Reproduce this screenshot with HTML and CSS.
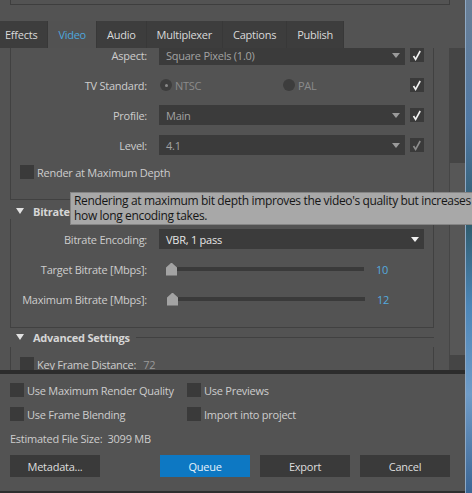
FILE: index.html
```html
<!DOCTYPE html>
<html lang="en">
<head>
    <meta charset="UTF-8">
    <meta name="viewport" content="width=device-width, initial-scale=1.0">
    <title>Export Settings</title>
    <link rel="stylesheet" href="styles.css">
</head>
<body>
<div class="screen">
    <div class="window">
        <div class="top-strip"><div class="top-box"></div></div>

        <div class="tabbar">
            <div class="tab">Effects</div>
            <div class="tab active">Video</div>
            <div class="tab">Audio</div>
            <div class="tab">Multiplexer</div>
            <div class="tab">Captions</div>
            <div class="tab">Publish</div>
        </div>

        <div class="main">
            <div class="scroller">
                <div class="settings">
                    <!-- basic video settings (scrolled a little) -->
                    <div class="box video-box">
                        <div class="row">
                            <span class="label">Aspect:</span>
                            <div class="select"><span>Square Pixels (1.0)</span><i class="caret"></i></div>
                            <span class="check"><svg viewBox="0 0 14 14"><path d="M3.5 8 L5.6 11.4 L10.2 3"/></svg></span>
                        </div>
                        <div class="row">
                            <span class="label">TV Standard:</span>
                            <div class="radios">
                                <div class="radio-item"><span class="radio selected"></span>NTSC</div>
                                <div class="radio-item"><span class="radio"></span>PAL</div>
                            </div>
                            <span class="check"><svg viewBox="0 0 14 14"><path d="M3.5 8 L5.6 11.4 L10.2 3"/></svg></span>
                        </div>
                        <div class="row">
                            <span class="label">Profile:</span>
                            <div class="select"><span>Main</span><i class="caret"></i></div>
                            <span class="check"><svg viewBox="0 0 14 14"><path d="M3.5 8 L5.6 11.4 L10.2 3"/></svg></span>
                        </div>
                        <div class="row">
                            <span class="label">Level:</span>
                            <div class="select"><span>4.1</span><i class="caret"></i></div>
                            <span class="check dim"><svg viewBox="0 0 14 14"><path d="M3.5 8 L5.6 11.4 L10.2 3"/></svg></span>
                        </div>
                        <div class="row check-row">
                            <span class="check empty"></span>
                            <span>Render at Maximum Depth</span>
                        </div>
                    </div>

                    <div class="section-head">
                        <i class="tri"></i>
                        <span class="head-title">Bitrate Settings</span>
                        <span class="head-line"></span>
                    </div>
                    <div class="box bitrate-box">
                        <div class="row">
                            <span class="label">Bitrate Encoding:</span>
                            <div class="select bright"><span>VBR, 1 pass</span><i class="caret"></i></div>
                        </div>
                        <div class="row">
                            <span class="label">Target Bitrate [Mbps]:</span>
                            <div class="slider">
                                <span class="thumb" style="margin-left: 7px"></span>
                                <span class="track"></span>
                                <span class="value">10</span>
                            </div>
                        </div>
                        <div class="row">
                            <span class="label">Maximum Bitrate [Mbps]:</span>
                            <div class="slider">
                                <span class="thumb" style="margin-left: 8px"></span>
                                <span class="track"></span>
                                <span class="value">12</span>
                            </div>
                        </div>
                    </div>

                    <div class="section-head advanced-head">
                        <i class="tri"></i>
                        <span class="head-title">Advanced Settings</span>
                        <span class="head-line"></span>
                    </div>
                    <div class="box advanced-box">
                        <div class="row check-row">
                            <span class="check empty"></span>
                            <span>Key Frame Distance:</span>
                            <span class="muted">72</span>
                        </div>
                    </div>
                </div>
            </div>
            <div class="scrollbar"><div class="scroll-thumb"></div></div>
        </div>

        <div class="footer">
            <div class="opt-row">
                <div class="opt"><span class="check empty"></span>Use Maximum Render Quality</div>
                <div class="opt"><span class="check empty"></span>Use Previews</div>
            </div>
            <div class="opt-row">
                <div class="opt"><span class="check empty"></span>Use Frame Blending</div>
                <div class="opt"><span class="check empty"></span>Import into project</div>
            </div>
            <div class="opt-row">Estimated File Size:&nbsp; 3099 MB</div>
            <div class="buttons">
                <button class="btn metadata">Metadata...</button>
                <button class="btn primary">Queue</button>
                <button class="btn">Export</button>
                <button class="btn">Cancel</button>
            </div>
        </div>
    </div>
    <div class="desktop"></div>

    <div class="tooltip">Rendering at maximum bit depth improves the video's quality but increases<br>how long encoding takes.</div>
</div>
</body>
</html>
```

FILE: styles.css
```css
/* Export settings dialog, dark theme */
body {
    margin: 0;
    background-color: #535353;
    font-family: "Open Sans", "Noto Sans", sans-serif;
    font-size: 11px;
    letter-spacing: -0.25px;
    color: #cdcdcd;
}
.screen {
    position: relative;
    display: flex;
    width: 472px;
    height: 493px;
    overflow: hidden;
}
.window {
    width: 465px;
    display: flex;
    flex-direction: column;
    background-color: #535353;
    border-bottom: 2px solid #2e2e2e;
}
.desktop {
    flex: 1;
    border-left: 1px solid #8fa9c4;
    background: linear-gradient(to bottom, #6a7f96 0%, #4f78a4 25%, #2f5b6c 45%, #4c86b8 62%, #6f9cc8 80%, #3b6594 100%);
}

/* top edge of the panel above */
.top-strip {
    height: 21px;
}
.top-box {
    margin-left: 10px;
    width: 438px;
    height: 4px;
    border: 1px solid #3e3e3e;
    border-top: none;
}

/* tabs */
.tabbar {
    display: flex;
    align-self: flex-start;
    height: 27px;
    margin-left: -5px;
    background-color: #3d3d3d;
}
.tab {
    padding: 0 10px;
    line-height: 27px;
    color: #dadada;
    border-right: 1px solid #383838;
}
.tab.active {
    background-color: #525252;
    color: #4ea6dd;
}

/* scrolling settings area */
.main {
    display: flex;
    height: 322px;
}
.scroller {
    flex: 1;
    overflow: hidden;
    padding: 0 15px 0 10px;
}
.settings {
    margin-top: -3px;
}
.scrollbar {
    width: 16px;
    background-color: #454545;
}
.scroll-thumb {
    margin-top: 115px;
    height: 192px;
    background-color: #575757;
    border-left: 1px solid #464646;
}

.box {
    border: 1px solid #414141;
    border-top: none;
    display: flex;
    flex-direction: column;
    gap: 10px;
}
.video-box {
    padding: 0 9px 20px 0;
}
.bitrate-box {
    padding: 10px 9px 18px 0;
}
.advanced-box {
    padding: 10px 9px 20px 0;
}
.row {
    display: flex;
    align-items: center;
    height: 20px;
}
.label {
    flex-shrink: 0;
    width: 136px;
    margin-right: 12px;
    text-align: right;
    white-space: nowrap;
}
.select {
    flex: 1;
    height: 20px;
    display: flex;
    align-items: center;
    padding: 0 5px 0 7px;
    background-color: #3b3b3b;
    color: #a2a2a2;
}
.select.bright {
    color: #e6e6e6;
}
.caret {
    margin-left: auto;
    width: 0;
    height: 0;
    border-left: 4px solid transparent;
    border-right: 4px solid transparent;
    border-top: 5px solid #9b9b9b;
}
.select.bright .caret {
    border-top-color: #f0f0f0;
}

.check {
    flex-shrink: 0;
    width: 14px;
    height: 14px;
    margin-left: 5px;
    background-color: #3a3a3a;
}
.check svg {
    display: block;
    width: 14px;
    height: 14px;
    fill: none;
    stroke: #f2f2f2;
    stroke-width: 1.6;
}
.check.dim svg {
    stroke: #8c8c8c;
}
.check.empty {
    margin-left: 0;
}
.check-row {
    height: 14px;
    padding-left: 9px;
    gap: 3px;
    white-space: nowrap;
}
.muted {
    margin-left: 4px;
    color: #999;
}

.radios {
    flex: 1;
    display: flex;
}
.radio-item {
    flex: 1;
    display: flex;
    align-items: center;
    gap: 3px;
    padding-left: 1px;
    color: #8b8b8b;
}
.radio {
    width: 12px;
    height: 12px;
    border-radius: 50%;
    background-color: #3d3d3d;
    display: flex;
    align-items: center;
    justify-content: center;
}
.radio.selected::after {
    content: "";
    width: 3px;
    height: 3px;
    border-radius: 50%;
    background-color: #8a8a8a;
}

/* section headers */
.section-head {
    display: flex;
    align-items: center;
    height: 16px;
    margin-top: 3px;
    padding-left: 6px;
}
.advanced-head {
    margin-top: 1px;
    margin-bottom: 2px;
}
.tri {
    width: 0;
    height: 0;
    border-left: 4.5px solid transparent;
    border-right: 4.5px solid transparent;
    border-top: 6px solid #e2e2e2;
    margin-right: 9px;
}
.head-title {
    font-weight: bold;
    color: #d6d6d6;
}
.head-line {
    flex: 1;
    margin-left: 6px;
    border-top: 1px solid #414141;
}

/* sliders */
.slider {
    flex: 1;
    display: flex;
    align-items: center;
}
.thumb {
    width: 11px;
    height: 13px;
    background-color: #a3a3a3;
    clip-path: polygon(50% 0, 100% 38%, 100% 100%, 0 100%, 0 38%);
}
.track {
    width: 187px;
    height: 4px;
    background-color: #3a3a3a;
}
.value {
    margin-left: 12px;
    color: #55aadf;
}

/* bottom part */
.footer {
    flex: 1;
    display: flex;
    flex-direction: column;
    gap: 10px;
    padding: 9px 15px 0 10px;
    border-top: 4px solid #2c2c2c;
}
.opt-row {
    display: flex;
    align-items: center;
    height: 14px;
}
.opt {
    width: 177px;
    display: flex;
    align-items: center;
    gap: 3px;
    white-space: nowrap;
}
.buttons {
    display: flex;
    gap: 10px;
}
.btn {
    width: 90px;
    height: 22px;
    padding: 0;
    border: none;
    background-color: #3a3a3a;
    color: #dedede;
    font-family: inherit;
    font-size: 11px;
    letter-spacing: inherit;
}
.btn.metadata {
    margin-right: auto;
}
.btn.primary {
    background-color: #0d78c3;
    color: #e8f2fa;
}

/* hover tooltip */
.tooltip {
    position: absolute;
    left: 70px;
    top: 192px;
    width: 420px;
    padding: 0 3px 1px;
    border: 1px solid #858585;
    background-color: #a8a8a8;
    color: #161616;
    font-size: 12px;
    letter-spacing: -0.35px;
    line-height: 15px;
    white-space: nowrap;
}
```
